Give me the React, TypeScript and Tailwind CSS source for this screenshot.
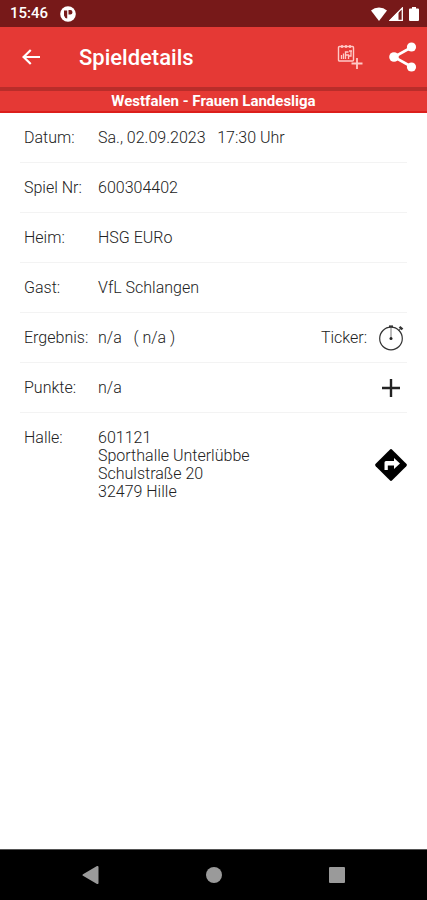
import type { ReactNode } from "react";

type Row = {
  label: string;
  value: string[];
  action?: ReactNode;
};

function BackIcon() {
  return (
    <svg viewBox="0 0 24 24" className="size-6" fill="currentColor">
      <path d="M21 11H7.2l5.3-5.3-1.5-1.5L3 12l8 7.8 1.5-1.5L7.2 13H21z" />
    </svg>
  );
}

function CalendarAddIcon() {
  return (
    <svg viewBox="0 0 26 26" className="size-[26px]" fill="none" stroke="currentColor">
      <rect x="1.5" y="2.5" width="15" height="14.5" rx="1" strokeWidth="1.4" />
      <path d="M5 1v3M9 1v3M13 1v3" strokeWidth="1.6" />
      <path d="M4.5 15v-4M6.5 15V9.5M8.5 15V8h3M8.5 11h3v4M14 7v5h-2M12 7h3" strokeWidth="1.3" />
      <path d="M20 14v11M14.5 19.5h11" strokeWidth="1.8" />
    </svg>
  );
}

function ShareIcon() {
  return (
    <svg viewBox="0 0 28 30" className="h-[30px] w-7">
      <path d="M23 5 5 15l18 10" fill="none" stroke="currentColor" strokeWidth="2.6" />
      <circle cx="22.5" cy="5" r="4.6" fill="currentColor" />
      <circle cx="5" cy="15" r="4.8" fill="currentColor" />
      <circle cx="22.5" cy="25" r="4.6" fill="currentColor" />
    </svg>
  );
}

function StopwatchIcon() {
  return (
    <svg viewBox="0 0 26 26" className="size-[26px]" fill="none" stroke="#333">
      <circle cx="13" cy="13.5" r="11.3" strokeWidth="1.2" />
      <path d="M13 3v10" strokeWidth="1" stroke="#777" />
      <circle cx="13" cy="13.5" r="1.5" fill="#222" stroke="none" />
      <path d="M11 1.4h4" strokeWidth="2" />
      <path d="m21.5 1.8 3 2.6" strokeWidth="2.4" />
      <path d="m20.8 5.6 1.800-2" strokeWidth="1" />
    </svg>
  );
}

function PlusIcon() {
  return (
    <svg viewBox="0 0 20 20" className="size-5" stroke="#222" strokeWidth="2.4">
      <path d="M10 1v18M1 10h18" />
    </svg>
  );
}

function DirectionsIcon() {
  return (
    <svg viewBox="0 0 32 32" className="size-8">
      <path d="M14.8.7a1.7 1.7 0 0 1 2.4 0l14.1 14.1a1.7 1.7 0 0 1 0 2.4L17.2 31.3a1.7 1.7 0 0 1-2.4 0L.7 17.2a1.7 1.7 0 0 1 0-2.4z" fill="#000" />
      <path d="M9.500 21v-7.500a1.500 1.500 0 0 1 1.500-1.500h8V9l6 5.500-6 5.500v-3.500h-6.200V21z" fill="#fff" />
    </svg>
  );
}

const rows: Row[] = [
  { label: "Datum:", value: ["Sa., 02.09.2023   17:30 Uhr"] },
  { label: "Spiel Nr:", value: ["600304402"] },
  { label: "Heim:", value: ["HSG EURo"] },
  { label: "Gast:", value: ["VfL Schlangen"] },
  {
    label: "Ergebnis:",
    value: ["n/a   ( n/a )"],
    action: (
      <button type="button" className="flex items-center gap-2">
        Ticker:
        <span className="flex w-8 justify-center">
          <StopwatchIcon />
        </span>
      </button>
    ),
  },
  {
    label: "Punkte:",
    value: ["n/a"],
    action: (
      <button type="button" aria-label="Punkte hinzufügen" className="flex w-8 justify-center">
        <PlusIcon />
      </button>
    ),
  },
  {
    label: "Halle:",
    value: ["601121", "Sporthalle Unterlübbe", "Schulstraße 20", "32479 Hille"],
    action: (
      <button type="button" aria-label="Route" className="flex">
        <DirectionsIcon />
      </button>
    ),
  },
];

function StatusBar() {
  return (
    <div className="flex h-[27px] items-center bg-[#771919] px-2 text-white">
      <span className="pl-0.5 text-[15px] font-medium">15:46</span>
      <svg viewBox="0 0 16 16" className="ml-3 size-4">
        <circle cx="8" cy="8" r="7.8" fill="#fff" />
        <path d="M4 4.500h3.200v8A4 4 0 0 1 4 9.500zM8.500 4h1.800a2.200 2.200 0 0 1 0 4.400H8.500z" fill="#771919" />
      </svg>
      <div className="ml-auto flex items-center gap-0.5">
        <svg viewBox="0 0 16 14" className="h-3.5 w-4">
          <path d="M0 3.500a12 12 0 0 1 16 0L8 14z" fill="#fff" />
        </svg>
        <svg viewBox="0 0 14 14" className="size-3.5">
          <path d="M13.300 1v12.300H1z" fill="none" stroke="#fff" strokeWidth="1.300" />
          <path d="M9.500 4.500V14H0z" fill="#fff" />
        </svg>
        <svg viewBox="0 0 10 14" className="ml-1 h-3.5 w-2.5">
          <path d="M3 0h4v1.500h2a1 1 0 0 1 1 1V13a1 1 0 0 1-1 1H1a1 1 0 0 1-1-1V2.500a1 1 0 0 1 1-1h2z" fill="#fff" />
        </svg>
      </div>
    </div>
  );
}

function NavBar() {
  return (
    <nav className="flex h-[51px] items-center justify-center gap-[99px] border-t border-[#555] bg-black text-[#9a9a9a]">
      <button type="button" aria-label="Zurück" className="flex w-6 justify-center">
        <svg viewBox="0 0 18 20" className="h-5 w-[18px]" fill="currentColor">
          <path d="M15.500 1a1 1 0 0 1 1 1v16a1 1 0 0 1-1.500.9L1 10.800a1 1 0 0 1 0-1.600L15 1.100z" />
        </svg>
      </button>
      <button type="button" aria-label="Startseite" className="flex w-6 justify-center">
        <span className="size-4 rounded-full bg-current" />
      </button>
      <button type="button" aria-label="Übersicht" className="flex w-6 justify-center">
        <span className="size-4 rounded-[1px] bg-current" />
      </button>
    </nav>
  );
}

export default function App() {
  return (
    <div className="flex min-h-screen flex-col bg-white font-['Roboto',sans-serif]">
      <StatusBar />
      <header className="flex h-[60px] items-center bg-[#e53935] pr-2.5 pl-[19px] text-white">
        <button type="button" aria-label="Zurück">
          <BackIcon />
        </button>
        <h1 className="ml-9 pt-0.5 text-[22px] leading-7 font-medium">Spieldetails</h1>
        <button type="button" aria-label="Zum Kalender hinzufügen" className="ml-auto text-[#ffc9c6]">
          <CalendarAddIcon />
        </button>
        <button type="button" aria-label="Teilen" className="ml-[26px]">
          <ShareIcon />
        </button>
      </header>
      <h2 className="flex h-[26px] items-center justify-center border-t-4 border-b-2 border-t-[#b92d2a] border-b-[#dc1f1c] bg-[#e53935] text-[15px] font-bold text-white">
        Westfalen - Frauen Landesliga
      </h2>

      <main className="flex-1 px-5 text-base leading-[18px] font-light text-[#222]">
        <dl>
          {rows.map((row) => (
            <div key={row.label} className="flex items-center border-b border-[#f3f3f3] pt-4 pb-[15px] last:border-b-0">
              <dt className="w-[78px] shrink-0 self-start pl-1">{row.label}</dt>
              <dd className="flex flex-1 items-center justify-between">
                <div className="whitespace-pre">
                  {row.value.map((line) => (
                    <p key={line}>{line}</p>
                  ))}
                </div>
                {row.action && <div className="-my-2">{row.action}</div>}
              </dd>
            </div>
          ))}
        </dl>
      </main>
      <NavBar />
    </div>
  );
}
